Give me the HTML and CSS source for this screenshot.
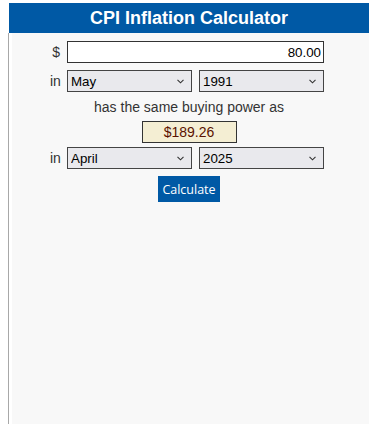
FILE: index.html
```html
<!DOCTYPE html>
<html lang="en">
<head>
  <meta charset="UTF-8">
  <meta name="viewport" content="width=device-width, initial-scale=1.0">
  <title>CPI Inflation Calculator</title>
  <link rel="stylesheet" href="styles.css">
</head>
<body>
  <h1 class="title">CPI Inflation Calculator</h1>

  <div class="panel">
    <form class="calc" onsubmit="return false">
      <div class="row">
        <label class="lbl" for="amount">$</label>
        <input type="text" id="amount" class="amount" value="80.00">
      </div>

      <div class="row">
        <span class="lbl">in</span>
        <select class="pick" id="month1">
          <option>January</option>
          <option>February</option>
          <option>March</option>
          <option>April</option>
          <option selected>May</option>
          <option>June</option>
        </select>
        <select class="pick" id="year1">
          <option>1990</option>
          <option selected>1991</option>
          <option>1992</option>
        </select>
      </div>

      <p class="same">has the same buying power as</p>
      <div class="result">$189.26</div>

      <div class="row row-tight">
        <span class="lbl">in</span>
        <select class="pick" id="month2">
          <option>March</option>
          <option selected>April</option>
          <option>May</option>
        </select>
        <select class="pick" id="year2">
          <option>2024</option>
          <option selected>2025</option>
        </select>
      </div>

      <button class="calc-btn" type="submit">Calculate</button>
    </form>
  </div>
</body>
</html>
```

FILE: styles.css
```css
* { box-sizing: border-box; }

body {
  margin: 0;
  padding-top: 3px;
  background: #fff;
  font-family: 'Liberation Sans', Arial, sans-serif;
  color: #222;
}

.title {
  margin: 0 0 0 9px;
  height: 30px;
  line-height: 30px;
  background: #0059a5;
  color: #fff;
  font-size: 18px;
  font-weight: bold;
  text-align: center;
}

.panel {
  margin-left: 8px;
  border-left: 1px solid #a8a8a8;
  box-shadow: inset 3px 0 0 #fff;
  background: #f8f8f8;
  min-height: calc(100vh - 33px);
  padding-top: 8px;
}

.calc { display: flex; flex-direction: column; }

.row {
  display: flex;
  align-items: center;
  gap: 7px;
  padding-left: 41px;
}
.row + .row { margin-top: 7px; }
.row-tight { margin-top: 4px; }

.lbl {
  width: 14px;
  margin-right: -4px;
  padding-right: 4px;
  text-align: right;
  font-size: 14px;
  color: #333;
}

.amount {
  width: 257px;
  height: 22px;
  padding: 0 2px;
  border: 1px solid #333;
  background: #fff;
  text-align: right;
  font: 13.33px 'Liberation Sans', Arial, sans-serif;
  color: #000;
}

.pick {
  -webkit-appearance: none;
  appearance: none;
  width: 125px;
  height: 22px;
  padding: 0 16px 0 3px;
  border: 1px solid #444;
  border-radius: 0;
  background: #e9e9ed url("data:image/svg+xml,%3Csvg xmlns='http://www.w3.org/2000/svg' width='7' height='5' viewBox='0 0 7 5'%3E%3Cpath d='M0.5 0.8 L3.5 3.8 L6.5 0.8' fill='none' stroke='%23333' stroke-width='1.1'/%3E%3C/svg%3E") no-repeat right 7px center;
  font: 13.33px 'Liberation Sans', Arial, sans-serif;
  color: #000;
}

.same {
  margin: 7px 0 0;
  line-height: 16px;
  font-size: 14px;
  text-align: center;
  color: #333;
}

.result {
  align-self: center;
  margin-top: 6px;
  width: 95px;
  height: 22px;
  line-height: 20px;
  border: 1px solid #333;
  background: #f4eed3;
  color: #5a1200;
  font-size: 14px;
  text-align: center;
}

.calc-btn {
  align-self: center;
  margin-top: 7px;
  height: 26px;
  padding: 0 4px;
  border: none;
  background: #0059a5;
  color: #fff;
  font: 12.5px 'Open Sans', sans-serif;
  cursor: pointer;
}
```
